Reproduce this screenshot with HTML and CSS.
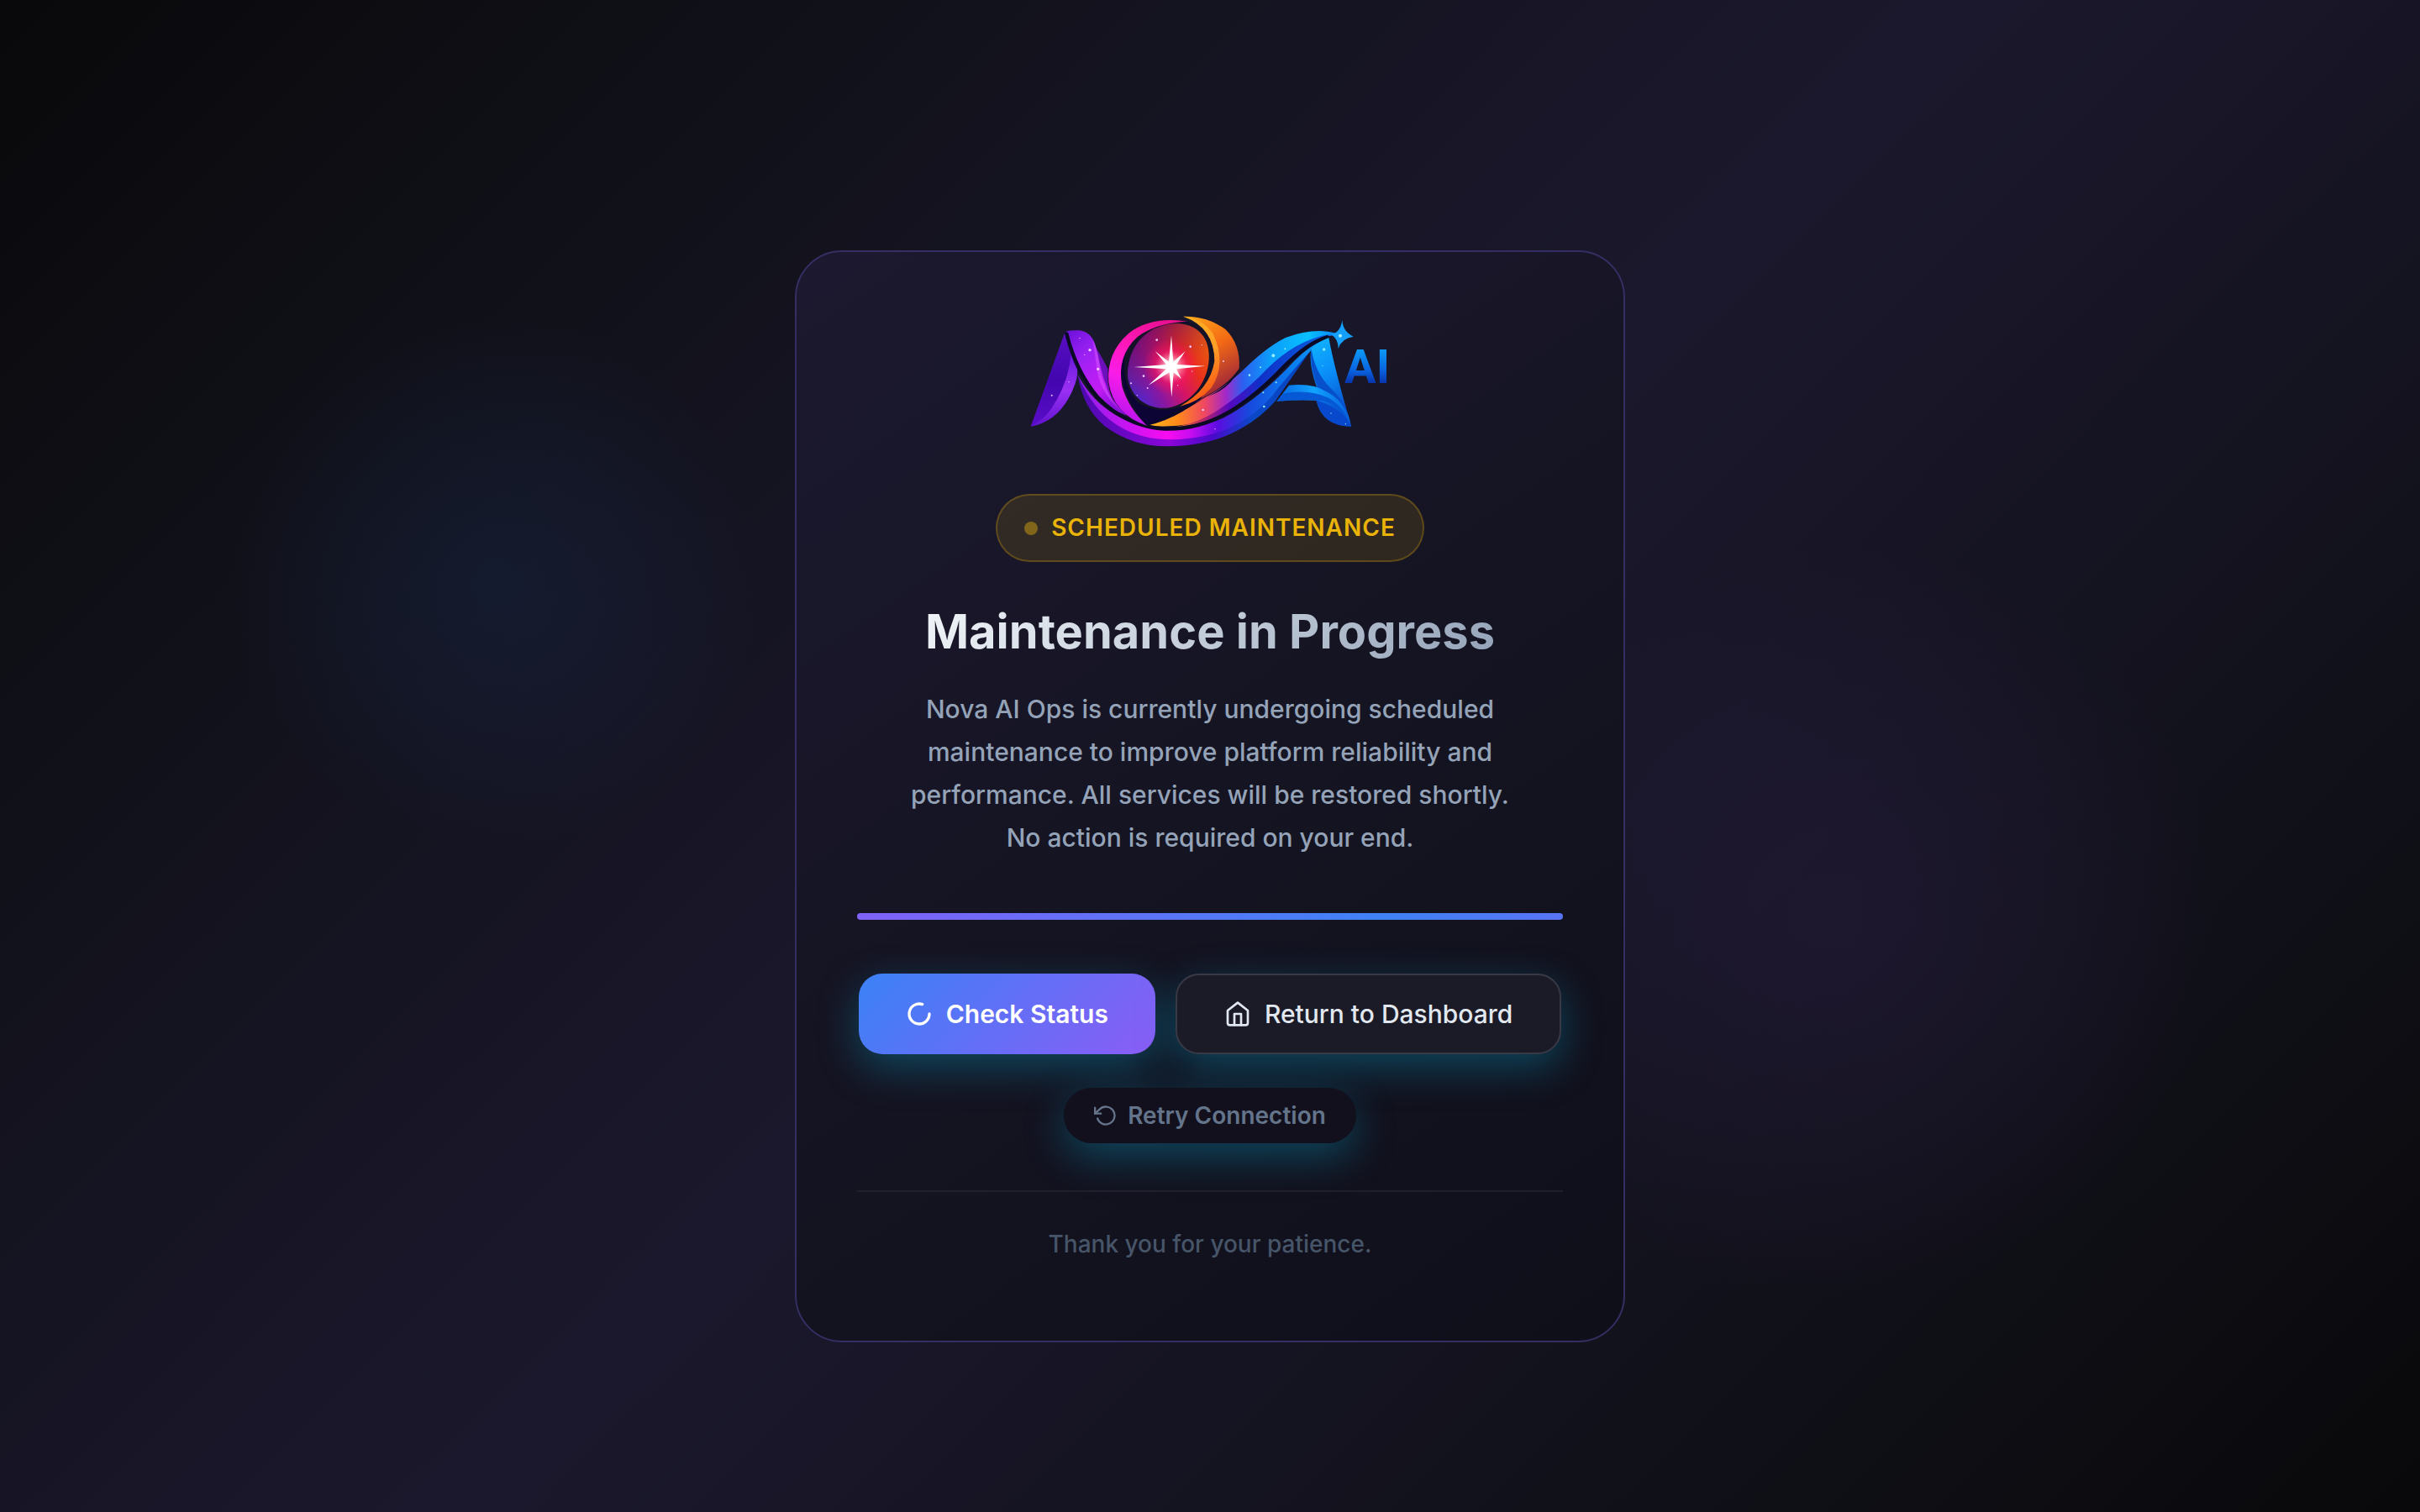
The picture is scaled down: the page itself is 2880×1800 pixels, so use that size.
FILE: index.html
```html
<!DOCTYPE html>
<html lang="en">
<head>
  <meta charset="UTF-8">
  <meta name="viewport" content="width=device-width, initial-scale=1.0">
  <title>Nova AI Ops - Maintenance</title>
  <link rel="stylesheet" href="styles.css">
</head>
<body>

<div class="orb orb-blue"></div>
<div class="orb orb-purple"></div>

<main class="card">
  <svg class="logo" viewBox="30 36 1320 492" role="img" aria-label="Nova AI">
    <defs>
      <linearGradient id="leg" x1="0" y1="0" x2="0" y2="1">
        <stop offset="0" stop-color="#5a0fc4"/><stop offset=".5" stop-color="#4206ae"/><stop offset="1" stop-color="#5a0dc8"/>
      </linearGradient>
      <linearGradient id="legEdge" x1="0" y1="0" x2="0" y2="1">
        <stop offset="0" stop-color="#6a1ad8"/><stop offset=".5" stop-color="#9a30f4"/><stop offset="1" stop-color="#6012cc"/>
      </linearGradient>
      <linearGradient id="fold" x1="0" y1="0" x2=".6" y2="1">
        <stop offset="0" stop-color="#6a10d8"/><stop offset=".35" stop-color="#9c22f4"/><stop offset=".75" stop-color="#c41cf4"/><stop offset="1" stop-color="#8a10dc"/>
      </linearGradient>
      <linearGradient id="swoosh" gradientUnits="userSpaceOnUse" x1="215" y1="0" x2="1115" y2="0">
        <stop offset="0" stop-color="#8a20e8"/><stop offset=".2" stop-color="#c814f0"/><stop offset=".36" stop-color="#f80cf0"/><stop offset=".45" stop-color="#c80cf0"/><stop offset=".56" stop-color="#5a0ce0"/><stop offset=".68" stop-color="#1848dc"/><stop offset=".85" stop-color="#087cf0"/><stop offset="1" stop-color="#10a0f8"/>
      </linearGradient>
      <linearGradient id="swooshDark" gradientUnits="userSpaceOnUse" x1="215" y1="0" x2="1050" y2="0">
        <stop offset="0" stop-color="#4c08b0"/><stop offset=".4" stop-color="#8a06d8"/><stop offset=".58" stop-color="#4a08c8"/><stop offset=".75" stop-color="#0a48c8"/><stop offset="1" stop-color="#0844c0"/>
      </linearGradient>
      <linearGradient id="ribbon" gradientUnits="userSpaceOnUse" x1="465" y1="0" x2="1150" y2="0">
        <stop offset="0" stop-color="#ffb81c"/><stop offset=".16" stop-color="#ff8a1a"/><stop offset=".3" stop-color="#f04860"/><stop offset=".41" stop-color="#a428c8"/><stop offset=".5" stop-color="#2a60f0"/><stop offset=".64" stop-color="#0c9cfa"/><stop offset=".84" stop-color="#08c0ff"/><stop offset="1" stop-color="#0880f0"/>
      </linearGradient>
      <linearGradient id="ribbonDark" gradientUnits="userSpaceOnUse" x1="560" y1="0" x2="1120" y2="0">
        <stop offset="0" stop-color="#f07020"/><stop offset=".2" stop-color="#b02070"/><stop offset=".36" stop-color="#5408c0"/><stop offset=".55" stop-color="#1030c8"/><stop offset="1" stop-color="#0664e0"/>
      </linearGradient>
      <linearGradient id="aLeg" x1="0" y1="0" x2=".3" y2="1">
        <stop offset="0" stop-color="#10b8ff"/><stop offset=".5" stop-color="#0a8cf8"/><stop offset="1" stop-color="#084cc8"/>
      </linearGradient>
      <linearGradient id="bar" x1="0" y1="0" x2="1" y2="0">
        <stop offset="0" stop-color="#0864e0"/><stop offset=".5" stop-color="#10a4ff"/><stop offset="1" stop-color="#0860dc"/>
      </linearGradient>
      <linearGradient id="pink" x1=".7" y1="0" x2=".3" y2="1">
        <stop offset="0" stop-color="#e81090"/><stop offset=".35" stop-color="#ff18b8"/><stop offset=".65" stop-color="#fa1ce8"/><stop offset="1" stop-color="#b414f0"/>
      </linearGradient>
      <linearGradient id="flame" x1=".2" y1="0" x2=".5" y2="1">
        <stop offset="0" stop-color="#ffb020"/><stop offset=".5" stop-color="#ffa028"/><stop offset="1" stop-color="#f85010"/>
      </linearGradient>
      <linearGradient id="flameOuter" x1="0" y1="0" x2=".4" y2="1">
        <stop offset="0" stop-color="#ffa81c"/><stop offset=".5" stop-color="#f46a14"/><stop offset="1" stop-color="#a02838"/>
      </linearGradient>
      <linearGradient id="globe" x1="0" y1=".85" x2="1" y2=".25">
        <stop offset="0" stop-color="#3c2cd8"/><stop offset=".28" stop-color="#8418a4"/><stop offset=".52" stop-color="#d41468"/><stop offset=".75" stop-color="#e8301c"/><stop offset="1" stop-color="#e85c10"/>
      </linearGradient>
      <linearGradient id="globeTop" x1=".2" y1="0" x2=".6" y2=".6">
        <stop offset="0" stop-color="#4c0c70" stop-opacity=".8"/><stop offset="1" stop-color="#a01040" stop-opacity="0"/>
      </linearGradient>
      <radialGradient id="glow">
        <stop offset="0" stop-color="#fff"/><stop offset=".14" stop-color="#fff"/><stop offset=".28" stop-color="#ff9cb0" stop-opacity=".85"/><stop offset=".6" stop-color="#ff1464" stop-opacity=".5"/><stop offset="1" stop-color="#ff1450" stop-opacity="0"/>
      </radialGradient>
      <linearGradient id="aiText" x1="0" y1="0" x2="0" y2="1">
        <stop offset=".2" stop-color="#0c98f4"/><stop offset=".55" stop-color="#0a64e0"/><stop offset=".85" stop-color="#0628a0"/>
      </linearGradient>
    </defs>

    <!-- N, left leg -->
    <path fill="url(#leg)" d="M50 443 L168 118 Q174 100 182 106 Q186 170 214 224 Q218 262 208 292 Q160 424 50 443Z"/>
    <path fill="url(#legEdge)" d="M194 186 Q200 214 216 240 Q218 268 208 292 Q160 424 50 443 Q96 420 122 382 Q184 290 194 186Z"/>

    <!-- lower swoosh, from the N round to the A -->
    <path fill="url(#swooshDark)" d="M218 262 Q238 378 312 440 Q410 515 540 514 Q670 512 762 470 Q860 425 925 350 Q980 270 1050 170 L1020 190 Q880 350 735 420 Q640 462 530 458 Q310 440 218 262Z"/>
    <path fill="url(#swoosh)" d="M214 252 Q262 364 330 418 Q420 490 550 490 Q680 486 765 446 Q852 404 910 336 Q960 270 1054 168 L1112 124 Q1050 150 990 210 Q860 350 735 414 Q640 456 530 454 Q310 436 214 252Z"/>

    <!-- N, folded stroke -->
    <path fill="#6c10bc" d="M276 150 Q310 205 325 238 Q318 310 356 384 L300 330Z"/>
    <path fill="url(#fold)" d="M176 104 Q190 98 222 100 Q264 104 280 150 Q298 228 312 276 Q334 350 392 404 Q330 382 284 334 Q212 250 176 104Z"/>
    <path fill="#e060ff" opacity=".45" d="M272 136 Q290 170 296 224 Q306 310 372 388 Q290 316 284 220Z"/>

    <!-- upper ribbon -->
    <path fill="url(#ribbon)" d="M465 440 Q564 402 660 346 Q740 306 800 250 Q890 160 960 126 Q1040 96 1110 104 Q1140 108 1156 116 Q1100 116 1056 138 Q990 180 920 250 Q800 370 700 412 Q600 452 465 440Z"/>
    <path fill="url(#ribbonDark)" d="M560 446 Q660 430 740 370 Q800 330 870 262 Q960 164 1056 130 Q1100 112 1130 116 Q1080 124 1040 152 Q990 188 920 256 Q800 374 700 414 Q630 442 560 446Z"/>
    <path fill="none" stroke="#0a0a24" stroke-width="13" stroke-linecap="round" d="M178 112 Q212 248 290 340 Q390 444 530 452 Q640 454 735 404 Q830 354 930 254 Q1030 146 1108 124"/>

    <!-- A -->
    <path fill="url(#aLeg)" d="M1052 164 Q1080 140 1114 126 Q1134 236 1195 443 Q1090 442 1070 352 L1076 316 Q1040 220 1052 164Z"/>
    <path fill="#0650cc" d="M1052 166 Q1064 250 1120 306 Q1172 350 1192 430 Q1150 350 1084 330 Q1042 230 1052 166Z"/>
    <path fill="#0848cc" d="M1070 350 Q1150 370 1195 443 Q1092 442 1070 350Z"/>
    <path fill="url(#bar)" d="M928 354 L972 296 Q1060 288 1104 318 Q1172 350 1192 434 Q1150 370 1096 352 Q1010 344 928 354Z"/>
    <path fill="#0658d4" d="M928 354 L950 326 Q1040 308 1110 340 Q1160 364 1192 434 Q1150 370 1096 352 Q1010 344 928 354Z"/>

    <!-- O -->
    <path fill="#0c0434" d="M600 66 Q440 70 384 170 Q340 300 465 440 Q600 410 700 300 Q740 110 600 66Z"/>
    <path fill="#131226" d="M480 96 Q560 56 630 76 Q716 120 710 220 Q690 340 586 374 Q500 400 430 356 Q372 290 386 190 Q420 110 480 96Z"/>
    <path fill="#0a0a24" d="M462 438 L600 376 L722 318 Q770 290 793 240 Q760 300 660 348 Q570 408 462 438Z"/>
    <path fill="url(#pink)" d="M610 68 Q480 48 400 110 Q320 180 328 284 Q345 400 465 440 Q400 380 376 300 Q356 190 432 122 Q500 72 610 68Z"/>
    <path fill="#9010b0" d="M325 238 Q318 340 380 400 Q330 350 326 300Z"/>
    <path fill="url(#globe)" d="M596 78 C660 90 690 140 686 206 C680 290 620 364 536 377 C460 384 396 330 396 252 C400 170 440 122 492 94 Q546 70 596 78Z"/>
    <path fill="url(#globeTop)" d="M596 78 C660 90 690 140 686 206 C680 290 620 364 536 377 C460 384 396 330 396 252 C400 170 440 122 492 94 Q546 70 596 78Z"/>
    <path fill="url(#flameOuter)" d="M595 50 Q680 48 745 96 Q800 150 794 236 Q750 300 656 344 Q740 240 690 130 Q660 70 595 50Z"/>
    <path fill="url(#flame)" d="M595 50 Q660 56 700 110 Q752 220 694 306 Q650 356 583 371 Q690 310 706 210 Q706 90 595 50Z"/>

    <!-- burst -->
    <circle cx="552" cy="230" r="100" fill="url(#glow)"/>
    <path fill="#fff" d="M552 118 L559 212 L602 174 L570 222 L674 227 L570 238 L588 274 L560 250 L553 338 L545 250 L470 296 L534 238 L418 231 L534 222 L494 174 L543 212Z"/>

    <!-- sparkle and dust -->
    <path fill="#14a0fc" d="M1162 63 Q1164 104 1202 122 Q1160 128 1148 165 Q1148 130 1122 114 Q1156 108 1162 63Z"/>
    <circle cx="1155" cy="119" r="6" fill="#b0f0ff"/>
    <g fill="#f0c8ff">
      <circle cx="261" cy="170" r="5"/><circle cx="242" cy="187" r="2"/><circle cx="290" cy="238" r="5"/><circle cx="125" cy="332" r="3"/><circle cx="186" cy="284" r="2"/><circle cx="225" cy="128" r="2"/>
      <circle cx="500" cy="134" r="4"/><circle cx="453" cy="263" r="4"/><circle cx="408" cy="289" r="3"/><circle cx="467" cy="306" r="3"/><circle cx="430" cy="332" r="2"/><circle cx="620" cy="158" r="4"/><circle cx="661" cy="152" r="2"/><circle cx="626" cy="246" r="2"/><circle cx="575" cy="296" r="2"/>
      <circle cx="665" cy="384" r="4"/><circle cx="708" cy="452" r="2"/><circle cx="738" cy="210" r="3"/>
    </g>
    <g fill="#90ecff">
      <circle cx="916" cy="190" r="6"/><circle cx="958" cy="166" r="3"/><circle cx="831" cy="260" r="4"/><circle cx="870" cy="232" r="3"/><circle cx="1097" cy="168" r="5"/><circle cx="880" cy="322" r="3"/><circle cx="883" cy="372" r="4"/><circle cx="926" cy="286" r="3"/><circle cx="1122" cy="396" r="2"/><circle cx="1174" cy="434" r="2"/><circle cx="1092" cy="226" r="2"/>
    </g>
    <text class="logo-ai" x="1170" y="288" fill="url(#aiText)">AI</text>
  </svg>

  <div class="badge">
    <span class="badge-dot"></span>
    Scheduled Maintenance
  </div>

  <h1>Maintenance in Progress</h1>
  <p class="message">
    Nova AI Ops is currently undergoing scheduled maintenance to improve platform reliability and performance. All services will be restored shortly. No action is required on your end.
  </p>

  <div class="progress"></div>

  <div class="actions">
    <button class="btn btn-primary" type="button">
      <svg viewBox="0 0 24 24"><path d="M21 12a9 9 0 1 1-6.219-8.56"/></svg>
      Check Status
    </button>
    <a class="btn btn-secondary" href="/">
      <svg viewBox="0 0 24 24"><path d="M3 9l9-7 9 7v11a2 2 0 0 1-2 2H5a2 2 0 0 1-2-2z"/><path d="M9 22V12h6v10"/></svg>
      Return to Dashboard
    </a>
  </div>
  <button class="retry" type="button">
    <svg viewBox="0 0 24 24"><path d="M1 4v6h6"/><path d="M3.51 15a9 9 0 1 0 2.13-9.36L1 10"/></svg>
    Retry Connection
  </button>

  <footer class="footer">Thank you for your patience.</footer>
</main>

</body>
</html>
```
FILE: styles.css
```css
* {
  margin: 0;
  padding: 0;
  box-sizing: border-box;
}
body {
  min-height: 100vh;
  display: flex;
  align-items: center;
  justify-content: center;
  padding: 96px 48px 0;
  overflow: hidden;
  position: relative;
  font-family: 'Inter', 'Liberation Sans', sans-serif;
  background: linear-gradient(135deg, #09090b 0%, #11111a 22%, #1b182d 50%, #11111a 78%, #09090b 100%);
  color: #e2e8f0;
}

/* soft lights behind the card */
.orb {
  position: absolute;
  border-radius: 50%;
}
.orb-blue {
  left: 20.5%;
  top: 38.5%;
  width: 640px;
  height: 640px;
  transform: translate(-50%, -50%);
  background: radial-gradient(circle, rgba(26, 54, 100, 0.24), rgba(26, 54, 100, 0.12) 40%, transparent 70%);
}
.orb-purple {
  left: 76%;
  top: 61%;
  width: 1000px;
  height: 1000px;
  transform: translate(-50%, -50%);
  background: radial-gradient(circle, rgba(58, 38, 92, 0.26), rgba(58, 38, 92, 0.12) 40%, transparent 64%);
}

.card {
  position: relative;
  width: 100%;
  max-width: 988px;
  padding: 72px;
  display: flex;
  flex-direction: column;
  align-items: center;
  text-align: center;
  border: 2px solid #352e62;
  border-radius: 56px;
  background: linear-gradient(145deg, #1c1930 0%, #151422 50%, #0f0f1a 100%);
}
.logo {
  width: 440px;
  margin-bottom: 52px;
}
.logo-ai {
  font-family: 'Liberation Sans Narrow', 'Roboto', 'Liberation Sans', sans-serif;
  font-size: 168px;
  font-weight: 700;
}

.badge {
  display: flex;
  align-items: center;
  gap: 16px;
  padding: 16px 32px;
  margin-bottom: 48px;
  border: 2px solid rgba(234, 179, 8, 0.25);
  border-radius: 50px;
  background: rgba(234, 179, 8, 0.12);
  color: #eab308;
  font-size: 28px;
  line-height: 45px;
  font-weight: 600;
  letter-spacing: 1px;
  text-transform: uppercase;
}
.badge-dot {
  width: 16px;
  height: 16px;
  border-radius: 50%;
  background: #80651a;
}

h1 {
  font-size: 56px;
  line-height: 70px;
  font-weight: 700;
  margin-bottom: 32px;
  background: linear-gradient(135deg, #f1f5f9, #94a3b8);
  -webkit-background-clip: text;
  background-clip: text;
  color: transparent;
}
.message {
  max-width: 740px;
  margin-bottom: 64px;
  color: #94a3b8;
  font-size: 30px;
  line-height: 51px;
  font-weight: 500;
}
.progress {
  width: 100%;
  height: 8px;
  margin-bottom: 64px;
  border-radius: 4px;
  background: linear-gradient(90deg, #8062f6, #3f82f6 75%, #5a74f6);
}

.actions {
  display: flex;
  justify-content: center;
  gap: 24px;
  margin-bottom: 40px;
}
.btn,
.retry {
  display: inline-flex;
  align-items: center;
  white-space: nowrap;
  border: none;
  font-family: inherit;
  text-decoration: none;
  cursor: pointer;
  box-shadow: 0 16px 48px rgba(6, 165, 205, 0.35);
}
.btn svg,
.retry svg {
  flex: none;
  fill: none;
  stroke: currentColor;
  stroke-width: 2;
  stroke-linecap: round;
  stroke-linejoin: round;
}
.btn {
  gap: 16px;
  height: 96px;
  padding: 0 56px;
  border-radius: 28px;
  font-size: 30px;
  font-weight: 600;
}
.btn svg {
  width: 32px;
  height: 32px;
}
.btn-primary {
  background: linear-gradient(135deg, #3b82f6, #8b5cf6);
  color: #fff;
}
.btn-primary svg {
  stroke-width: 2.5;
}
.btn-secondary {
  border: 2px solid #393946;
  background: #1b1a27;
  color: #e2e8f0;
  font-weight: 500;
}
.retry {
  gap: 12px;
  height: 66px;
  padding: 0 36px;
  margin-bottom: 56px;
  border-radius: 33px;
  background: #11101c;
  color: #64748b;
  font-size: 28px;
  font-weight: 600;
}
.retry svg {
  width: 28px;
  height: 28px;
}

.footer {
  width: 100%;
  padding: 40px 0 20px;
  border-top: 2px solid rgba(255, 255, 255, 0.06);
  color: #475569;
  font-size: 28px;
  line-height: 45px;
  font-weight: 500;
}
```
